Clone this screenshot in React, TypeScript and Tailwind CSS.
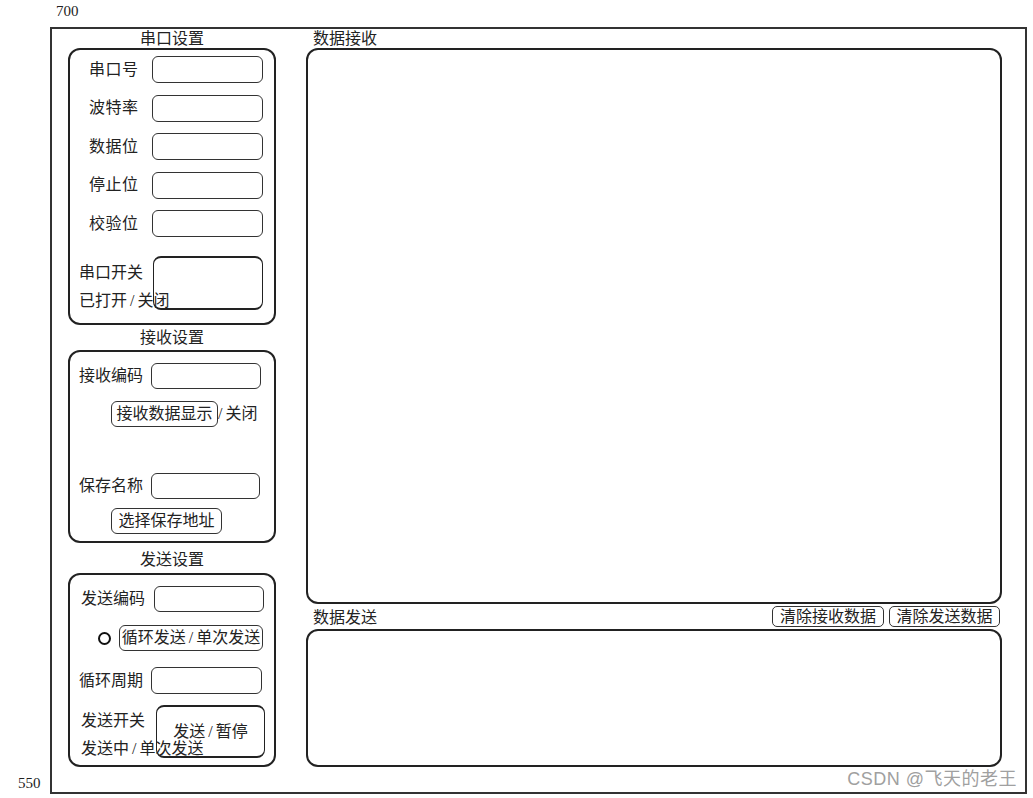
import React from "react";

const F = "font-['Liberation_Serif','Noto_Sans_CJK_SC',serif]";

function S() {
  return <span className="px-[3px]">/</span>;
}

function Input({ w = "w-[111px]", h = "h-[27px]" }: { w?: string; h?: string }) {
  return <div className={`${w} ${h} shrink-0 rounded-[6px] border border-[#333]`} />;
}

function Row({ label }: { label: string }) {
  return (
    <div className="flex items-center">
      <div className="w-[63px] text-[16px] leading-[22px] tracking-[0.5px] whitespace-nowrap">{label}</div>
      <Input />
    </div>
  );
}

function Btn({ children, w }: { children: React.ReactNode; w: string }) {
  return (
    <div className={`${w} h-[26px] shrink-0 rounded-[6px] border border-[#333] flex items-center justify-center text-[16px] leading-[22px] whitespace-nowrap`}>
      {children}
    </div>
  );
}

export default function App() {
  return (
    <div className={`w-[1033px] h-[798px] bg-white text-[#222] relative overflow-hidden ${F}`}>
      <div className="h-[27px] pl-[56px] text-[15px] leading-[22px]">700</div>
      <div className="flex">
        <div className="w-[50px] h-[767px] flex flex-col justify-end">
          <div className="pl-[18px] text-[15px] leading-[22px]">550</div>
        </div>
        <div className="w-[977px] h-[767px] border-2 border-[#333] flex pl-[16px]">
          {/* left column */}
          <div className="w-[208px] flex flex-col">
            <div className="h-[19px] text-center text-[16px] leading-[19px]">串口设置</div>
            <div className="h-[277px] border-2 border-[#222] rounded-[12px] pt-[6px] flex flex-col">
              <div className="pl-[19px] flex flex-col gap-[11.5px]">
                <Row label="串口号" />
                <Row label="波特率" />
                <Row label="数据位" />
                <Row label="停止位" />
                <Row label="校验位" />
              </div>
              <div className="mt-[19px] pl-[9px] flex">
                <div className="w-[74px] shrink-0 flex flex-col pt-[6px] text-[16px] leading-[22px] whitespace-nowrap">
                  <div>串口开关</div>
                  <div className="mt-[6px]">已打开<S />关闭</div>
                </div>
                <div className="w-[110px] h-[54px] rounded-[8px] border border-y-2 border-[#222]" />
              </div>
            </div>
            <div className="h-[25px] text-center text-[16px] leading-[25px]">接收设置</div>
            <div className="h-[193px] border-2 border-[#222] rounded-[12px] pt-[11px] flex flex-col">
              <div className="pl-[9px] flex items-center">
                <div className="w-[72px] text-[16px] leading-[22px] whitespace-nowrap">接收编码</div>
                <Input w="w-[110px]" h="h-[26px]" />
              </div>
              <div className="mt-[12px] pl-[41px] flex items-center">
                <Btn w="w-[107px]">接收数据显示</Btn>
                <span className="text-[16px] leading-[22px] whitespace-nowrap"><span className="pr-[3px]">/</span>关闭</span>
              </div>
              <div className="mt-[46px] pl-[9px] flex items-center">
                <div className="w-[72px] text-[16px] leading-[22px] whitespace-nowrap">保存名称</div>
                <Input w="w-[109px]" h="h-[26px]" />
              </div>
              <div className="mt-[9px] pl-[41px] flex items-center">
                <Btn w="w-[111px]">选择保存地址</Btn>
              </div>
            </div>
            <div className="h-[30px] flex items-end justify-center pb-[2px] text-[16px] leading-[22px]">发送设置</div>
            <div className="h-[194px] border-2 border-[#222] rounded-[12px] pt-[11px] flex flex-col">
              <div className="pl-[11px] flex items-center">
                <div className="w-[73px] text-[16px] leading-[22px] whitespace-nowrap">发送编码</div>
                <Input w="w-[110px]" h="h-[26px]" />
              </div>
              <div className="mt-[13px] pl-[28px] flex items-center">
                <div className="w-[13px] h-[13px] rounded-full border-2 border-[#111] shrink-0" />
                <div className="ml-[8px]">
                  <Btn w="w-[144px]">循环发送<S />单次发送</Btn>
                </div>
              </div>
              <div className="mt-[16px] pl-[9px] flex items-center">
                <div className="w-[72px] text-[16px] leading-[22px] whitespace-nowrap">循环周期</div>
                <Input w="w-[111px]" h="h-[27px]" />
              </div>
              <div className="mt-[11px] pl-[11px] flex">
                <div className="w-[75px] shrink-0 flex flex-col pt-[5px] text-[16px] leading-[22px] whitespace-nowrap">
                  <div>发送开关</div>
                  <div className="mt-[6px]">发送中<S />单次发送</div>
                </div>
                <div className="w-[109px] h-[53px] rounded-[8px] border border-y-2 border-[#222] flex items-center justify-center text-[16px] leading-[22px] whitespace-nowrap">
                  发送<S />暂停
                </div>
              </div>
            </div>
          </div>
          {/* right column */}
          <div className="ml-[30px] w-[696px] flex flex-col">
            <div className="h-[19px] pl-[7px] text-[16px] leading-[19px]">数据接收</div>
            <div className="h-[556px] border-2 border-[#222] rounded-[12px]" />
            <div className="h-[25px] flex items-start">
              <div className="pl-[7px] pt-[3px] text-[16px] leading-[22px] flex-1">数据发送</div>
              <div className="mt-[2px] flex gap-[5px] mr-[2px]">
                <div className="w-[112px] h-[21px] rounded-[5px] border border-[#333] flex items-center justify-center text-[16px] leading-[19px] whitespace-nowrap">清除接收数据</div>
                <div className="w-[111px] h-[21px] rounded-[5px] border border-[#333] flex items-center justify-center text-[16px] leading-[19px] whitespace-nowrap">清除发送数据</div>
              </div>
            </div>
            <div className="h-[138px] border-2 border-[#222] rounded-[12px]" />
          </div>
        </div>
      </div>
      <div className="absolute right-[16px] top-[768px] text-[18px] leading-[22px] tracking-[0.5px] text-[#a0a0a0] font-['Liberation_Sans','Noto_Sans_CJK_SC',sans-serif] whitespace-nowrap">
        CSDN @飞天的老王
      </div>
    </div>
  );
}
